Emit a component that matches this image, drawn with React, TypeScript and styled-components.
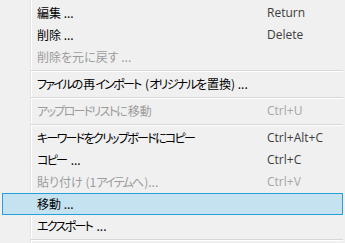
import React from "react";
import styled, { createGlobalStyle } from "styled-components";

const Global = createGlobalStyle`
  html, body { margin: 0; padding: 0; background: #f0f0f0; }
  body { width: 345px; height: 243px; overflow: hidden; }
`;

const Menu = styled.div`
  box-sizing: border-box;
  width: 345px;
  height: 243px;
  padding: 2px 2px 0 2px;
  display: flex;
  flex-direction: column;
  background:
    linear-gradient(to right, transparent 30px, #e3e3e3 30px, #e3e3e3 31px, #ffffff 31px, #ffffff 32px, transparent 32px),
    #f0f0f0;
  font-family: "Noto Sans CJK JP", "Open Sans", sans-serif;
  font-feature-settings: "palt";
  font-size: 12px;
`;

const Item = styled.div<{ $disabled?: boolean; $active?: boolean }>`
  box-sizing: border-box;
  height: 22px;
  display: grid;
  grid-template-columns: 230px 1fr;
  align-items: center;
  padding-left: 34px;
  border: 1px solid ${(p) => (p.$active ? "#26a0da" : "transparent")};
  background: ${(p) => (p.$active ? "#c5e2f0" : "transparent")};
  color: ${(p) => (p.$disabled ? "#9c9c9c" : "#000000")};
  white-space: nowrap;
`;

const Label = styled.span`
  line-height: 20px;
`;

const Kana = styled.span`
  letter-spacing: -1.7px;
  padding-right: 1.7px;
`;

const Shortcut = styled.span<{ $disabled?: boolean }>`
  font-family: "Open Sans", "Noto Sans", sans-serif;
  font-size: 12px;
  color: ${(p) => (p.$disabled ? "#a6a6a6" : "#3c3c3c")};
  line-height: 20px;
`;

const Separator = styled.div`
  height: 5px;
  display: flex;
  align-items: center;
  margin-left: 29px;
  &::after {
    content: "";
    flex: 1;
    height: 1px;
    background: #d7d7d7;
    border-bottom: 1px solid #ffffff;
  }
`;

type Entry =
  | { sep: true }
  | { label: string; shortcut?: string; disabled?: boolean; active?: boolean; sep?: false };

const entries: Entry[] = [
  { label: "編集 ...", shortcut: "Return" },
  { label: "削除 ...", shortcut: "Delete" },
  { label: "削除を元に戻す ...", disabled: true },
  { sep: true },
  { label: "ファイルの再インポート (オリジナルを置換) ..." },
  { sep: true },
  { label: "アップロードリストに移動", shortcut: "Ctrl+U", disabled: true },
  { sep: true },
  { label: "キーワードをクリップボードにコピー", shortcut: "Ctrl+Alt+C" },
  { label: "コピー ...", shortcut: "Ctrl+C" },
  { label: "貼り付け (1アイテムへ)...", shortcut: "Ctrl+V", disabled: true },
  { label: "移動 ...", active: true },
  { label: "エクスポート ..." },
  { sep: true },
];

function renderLabel(text: string) {
  const parts = text.split(/([\u3040-\u30ff]+)/).filter((s) => s.length > 0);
  return parts.map((p, i) =>
    /^[\u3040-\u30ff]+$/.test(p) ? <Kana key={i}>{p}</Kana> : <React.Fragment key={i}>{p}</React.Fragment>
  );
}

export default function App() {
  return (
    <>
      <Global />
      <Menu>
        {entries.map((e, i) =>
          e.sep ? (
            <Separator key={i} />
          ) : (
            <Item key={i} $disabled={e.disabled} $active={e.active}>
              <Label>{renderLabel(e.label)}</Label>
              <Shortcut $disabled={e.disabled}>{e.shortcut ?? ""}</Shortcut>
            </Item>
          )
        )}
      </Menu>
    </>
  );
}
